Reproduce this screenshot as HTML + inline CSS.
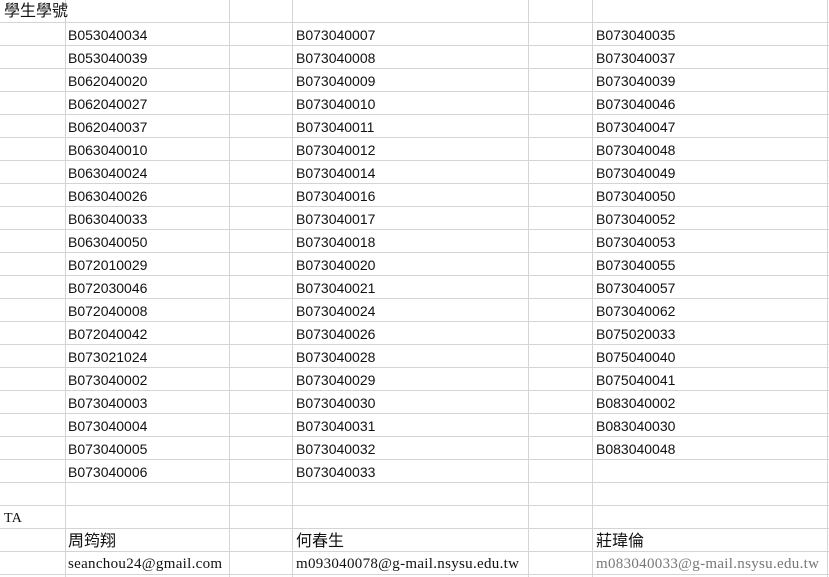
<!DOCTYPE html>
<html><head><meta charset="utf-8"><style>
body{margin:0;width:829px;height:577px;overflow:hidden;background:#fff;position:relative;
font-family:"Liberation Sans","Noto Sans CJK TC",sans-serif;font-size:14px;color:#111;}
.g{position:absolute;left:0;top:0;width:829px;height:577px;
background-image:repeating-linear-gradient(to bottom,transparent 0,transparent 22px,#d4d4d4 22px,#d4d4d4 23px);}
.v{position:absolute;top:0;width:1px;height:577px;background:#d4d4d4;}
.c{position:absolute;line-height:25px;white-space:nowrap;}
.a{left:4px}.b{left:68px}.d{left:296px}.f{left:596px}
.s{font-family:"Liberation Serif","Noto Serif CJK TC",serif;font-size:15px;letter-spacing:0.3px}
.k{font-size:16px}
</style></head><body>
<div class="g"></div>
<div class="v" style="left:65px"></div><div class="v" style="left:229px"></div>
<div class="v" style="left:292px"></div><div class="v" style="left:528px"></div>
<div class="v" style="left:592px"></div><div class="v" style="left:827px"></div>
<div class="c a k" style="top:-1px">學生學號</div>
<div class="c b" style="top:23px">B053040034</div><div class="c d" style="top:23px">B073040007</div><div class="c f" style="top:23px">B073040035</div>
<div class="c b" style="top:46px">B053040039</div><div class="c d" style="top:46px">B073040008</div><div class="c f" style="top:46px">B073040037</div>
<div class="c b" style="top:69px">B062040020</div><div class="c d" style="top:69px">B073040009</div><div class="c f" style="top:69px">B073040039</div>
<div class="c b" style="top:92px">B062040027</div><div class="c d" style="top:92px">B073040010</div><div class="c f" style="top:92px">B073040046</div>
<div class="c b" style="top:115px">B062040037</div><div class="c d" style="top:115px">B073040011</div><div class="c f" style="top:115px">B073040047</div>
<div class="c b" style="top:138px">B063040010</div><div class="c d" style="top:138px">B073040012</div><div class="c f" style="top:138px">B073040048</div>
<div class="c b" style="top:161px">B063040024</div><div class="c d" style="top:161px">B073040014</div><div class="c f" style="top:161px">B073040049</div>
<div class="c b" style="top:184px">B063040026</div><div class="c d" style="top:184px">B073040016</div><div class="c f" style="top:184px">B073040050</div>
<div class="c b" style="top:207px">B063040033</div><div class="c d" style="top:207px">B073040017</div><div class="c f" style="top:207px">B073040052</div>
<div class="c b" style="top:230px">B063040050</div><div class="c d" style="top:230px">B073040018</div><div class="c f" style="top:230px">B073040053</div>
<div class="c b" style="top:253px">B072010029</div><div class="c d" style="top:253px">B073040020</div><div class="c f" style="top:253px">B073040055</div>
<div class="c b" style="top:276px">B072030046</div><div class="c d" style="top:276px">B073040021</div><div class="c f" style="top:276px">B073040057</div>
<div class="c b" style="top:299px">B072040008</div><div class="c d" style="top:299px">B073040024</div><div class="c f" style="top:299px">B073040062</div>
<div class="c b" style="top:322px">B072040042</div><div class="c d" style="top:322px">B073040026</div><div class="c f" style="top:322px">B075020033</div>
<div class="c b" style="top:345px">B073021024</div><div class="c d" style="top:345px">B073040028</div><div class="c f" style="top:345px">B075040040</div>
<div class="c b" style="top:368px">B073040002</div><div class="c d" style="top:368px">B073040029</div><div class="c f" style="top:368px">B075040041</div>
<div class="c b" style="top:391px">B073040003</div><div class="c d" style="top:391px">B073040030</div><div class="c f" style="top:391px">B083040002</div>
<div class="c b" style="top:414px">B073040004</div><div class="c d" style="top:414px">B073040031</div><div class="c f" style="top:414px">B083040030</div>
<div class="c b" style="top:437px">B073040005</div><div class="c d" style="top:437px">B073040032</div><div class="c f" style="top:437px">B083040048</div>
<div class="c b" style="top:460px">B073040006</div><div class="c d" style="top:460px">B073040033</div>
<div class="c a s" style="top:506px;font-size:14px">TA</div>
<div class="c b k" style="top:529px">周筠翔</div><div class="c d k" style="top:529px">何春生</div><div class="c f k" style="top:529px">莊瑋倫</div>
<div class="c b s" style="top:552px">seanchou24@gmail.com</div>
<div class="c d s" style="top:552px">m093040078@g-mail.nsysu.edu.tw</div>
<div class="c f s" style="top:552px;color:#777">m083040033@g-mail.nsysu.edu.tw</div>
</body></html>
